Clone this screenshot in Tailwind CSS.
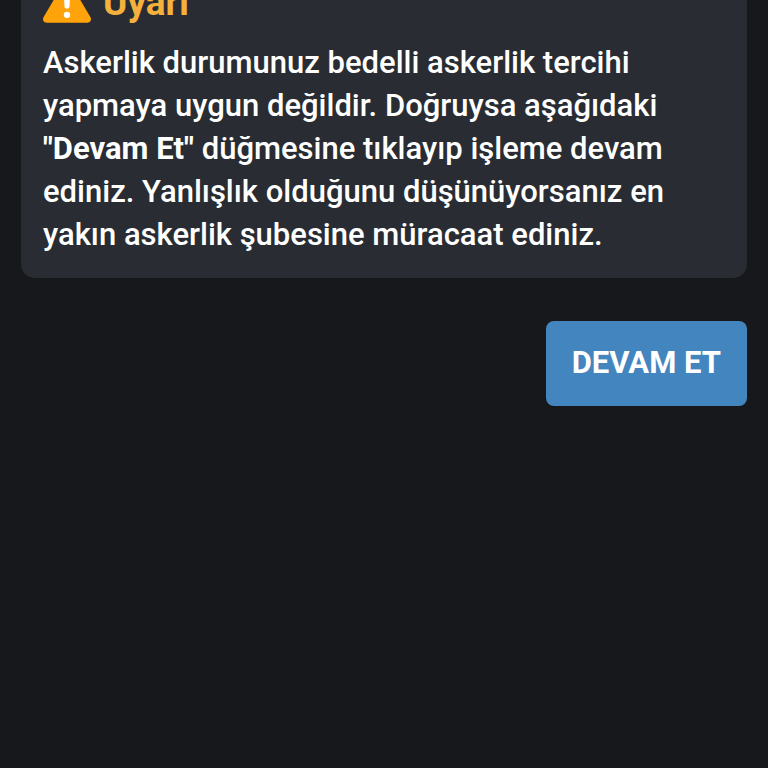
<!DOCTYPE html>
<html lang="tr">
<head>
    <meta charset="UTF-8">
    <title>Uyarı</title>
    <meta name="viewport" content="width=device-width, initial-scale=1.0">
    <script src="https://cdn.jsdelivr.net/npm/@tailwindcss/browser@4"></script>
</head>
<body class="bg-[#16181b] min-h-screen overflow-hidden font-['Roboto',sans-serif] text-white">
    <main class="-mt-11 px-[21px]">
        <section class="rounded-[14px] bg-[#292d33] px-[22px] pt-[22px] pb-[22px]">
            <div class="flex items-end gap-3 mb-[15px]">
                <svg class="size-12 shrink-0" viewBox="0 0 512 512" aria-hidden="true">
                    <path fill="#ffa30a" d="M256 32c14.200 0 27.300 7.500 34.500 19.800l216 368c7.300 12.400 7.300 27.700 .2 40.100S486.300 476 472 476H40c-14.300 0-27.600-3.700-34.700-16.100s-7-27.800 .2-40.100l216-368C228.700 39.500 241.800 32 256 32z"/>
                    <path fill="#fff" d="M256 150c-19 0-34 14-33 33l6 122c1 14 12 22 27 22s26-8 27-22l6-122c1-19-14-33-33-33z"/>
                    <circle cx="256" cy="393" r="34" fill="#fff"/>
                </svg>
                <h1 class="text-[37px] leading-[46px] font-bold text-[#f4b13c]">Uyarı</h1>
            </div>
            <p class="text-[31px] leading-[43px] font-medium">
                Askerlik durumunuz bedelli askerlik tercihi yapmaya uygun değildir. Doğruysa aşağıdaki <b class="font-bold">"Devam Et"</b> düğmesine tıklayıp işleme devam ediniz. Yanlışlık olduğunu düşünüyorsanız en yakın askerlik şubesine müracaat ediniz.
            </p>
        </section>

        <div class="flex justify-end mt-[43px]">
            <button type="button" class="rounded-lg bg-[#4385be] px-[26px] pt-5 pb-[22px] text-[31px] leading-[43px] font-bold">DEVAM ET</button>
        </div>
    </main>
</body>
</html>
